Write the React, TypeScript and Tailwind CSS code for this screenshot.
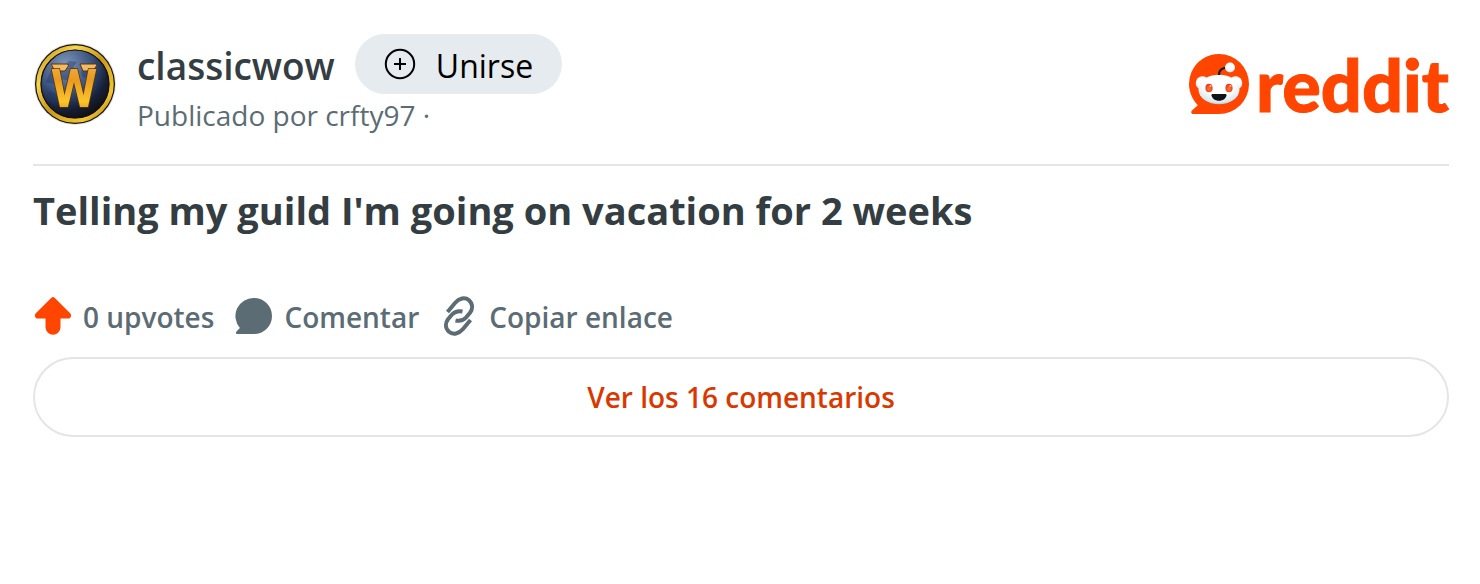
const Avatar = () => (
  <svg viewBox="0 0 84 84" className="size-[84px] shrink-0" role="img" aria-label="classicwow">
    <defs>
      <linearGradient id="ring" x1="0" y1="0" x2="1" y2="1">
        <stop offset="0" stopColor="#b8860f" />
        <stop offset="0.25" stopColor="#f7d650" />
        <stop offset="0.5" stopColor="#c9981a" />
        <stop offset="0.8" stopColor="#f2c62e" />
        <stop offset="1" stopColor="#9a6d10" />
      </linearGradient>
      <radialGradient id="globe" cx="0.35" cy="0.22" r="0.85">
        <stop offset="0" stopColor="#8096ba" />
        <stop offset="0.45" stopColor="#3d5682" />
        <stop offset="0.75" stopColor="#17213a" />
        <stop offset="1" stopColor="#100b0a" />
      </radialGradient>
      <linearGradient id="gold" x1="0" y1="0" x2="0" y2="1">
        <stop offset="0" stopColor="#f0b850" />
        <stop offset="0.35" stopColor="#e89a20" />
        <stop offset="0.7" stopColor="#fbc42a" />
        <stop offset="1" stopColor="#c47a12" />
      </linearGradient>
    </defs>
    <circle cx="42" cy="41" r="41" fill="#e3e3e3" />
    <circle cx="42" cy="41" r="40" fill="#15110a" />
    <circle cx="42" cy="41" r="36.5" fill="none" stroke="url(#ring)" strokeWidth="4.5" />
    <circle cx="42" cy="41" r="34" fill="url(#globe)" stroke="#15110a" strokeWidth="1.2" />
    <path d="M18 27l7-6 6 2 5-5 8 1-4 5 5 4-7 3-4 6-8-1-5 5-8-2z" fill="#1f3661" opacity="0.4" />
    <path d="M54 22l8 3 5 9-5 3-6-4-6 2-2-6z M14 47l8 3 4 8-5 3-6-5z" fill="#1f3661" opacity="0.4" />
    <path d="M18 21h16l2 1-4 6H22z M47 21h16l1 1-4 6H50z" fill="#f0bd66" stroke="#5e3309" strokeWidth="1" />
    <text
      x="41"
      y="64"
      textAnchor="middle"
      fontFamily="Roboto, sans-serif"
      fontWeight="700"
      fontSize="53"
      fill="url(#gold)"
      stroke="#5e3309"
      strokeWidth="1.5"
      paintOrder="stroke"
    >
      W
    </text>
  </svg>
)

const Snoo = () => (
  <svg viewBox="0 0 62 62" className="size-[62px] shrink-0" aria-hidden="true">
    <defs>
      <radialGradient id="face" cx="0.5" cy="0.3" r="0.75">
        <stop offset="0.5" stopColor="#ffffff" />
        <stop offset="0.85" stopColor="#dbe6ec" />
        <stop offset="1" stopColor="#94a9b8" />
      </radialGradient>
      <radialGradient id="eye" cx="0.5" cy="0.6" r="0.6">
        <stop offset="0" stopColor="#ff7a2a" />
        <stop offset="1" stopColor="#e8321a" />
      </radialGradient>
    </defs>
    <path d="M31 1a30 30 0 0 1 0 60H5.500c-2.200 0-3-2-1.500-3.500l5.800-5.300A30 30 0 0 1 31 1z" fill="#ff4500" />
    <circle cx="14.500" cy="30" r="6.800" fill="url(#face)" />
    <circle cx="47.500" cy="30" r="6.800" fill="url(#face)" />
    <ellipse cx="31" cy="36.500" rx="20.500" ry="14.800" fill="url(#face)" />
    <path d="M31 22c0-4 2.800-7 7.500-7.500" fill="none" stroke="#171c1f" strokeWidth="2.200" />
    <circle cx="42" cy="14.500" r="5" fill="url(#face)" />
    <ellipse cx="21" cy="35" rx="3.600" ry="4.300" fill="url(#eye)" />
    <ellipse cx="41" cy="35" rx="3.600" ry="4.300" fill="url(#eye)" />
    <circle cx="22.500" cy="33" r="1" fill="#ffc9a8" />
    <circle cx="42.500" cy="33" r="1" fill="#ffc9a8" />
    <path d="M23.500 42.200c0-.8.600-1.100 1.500-1.100h12c.9 0 1.500.3 1.500 1.100-.6 3.400-3.500 5.500-7.500 5.500s-6.900-2.100-7.500-5.500z" fill="#101416" />
  </svg>
)

const JoinIcon = () => (
  <svg viewBox="0 0 32 32" className="size-8" fill="none" stroke="currentColor" strokeWidth="2" aria-hidden="true">
    <circle cx="16" cy="16" r="14.200" />
    <path d="M16 10v12M10 16h12" />
  </svg>
)

const UpvoteIcon = () => (
  <svg viewBox="0 0 40 40" className="size-10" fill="#ff4500" aria-hidden="true">
    <path d="M18.400 1.700a2.300 2.300 0 0 1 3.200 0L37.200 17.200c1.700 1.900.8 5.300-1.800 5.300H27.500v8.800a7.500 7.500 0 0 1-15 0V22.500H4.600c-2.600 0-3.500-3.400-1.800-5.300z" />
  </svg>
)

const CommentIcon = () => (
  <svg viewBox="0 0 40 40" className="size-10" fill="#5c6c74" aria-hidden="true">
    <path d="M20 2a18 18 0 0 1 0 36H3.500c-1.500 0-2-1.500-1-2.500l3.400-3.600A18 18 0 0 1 20 2z" />
  </svg>
)

const LinkIcon = () => (
  <svg viewBox="0 0 40 40" className="size-10" fill="none" stroke="#5c6c74" strokeWidth="4" aria-hidden="true">
    <path d="M8.500 16L16 7C20 2.300 26 .8 30 4.300C34 8 33.800 13 31 16.800L27 21.500C24.300 24.500 21 25.500 16.500 24.500" />
    <path d="M31.500 24L24 33C20 37.700 14 39.200 10 35.700C6 32 6.200 27 9 23.200L13 18.500C15.700 15.500 19 14.500 23.500 15.500" />
  </svg>
)

const App = () => {
  return (
    <div className="min-h-screen bg-white pt-[34px] pr-[31px] pl-[33px] font-['Open_Sans','Noto_Sans',sans-serif] text-[#5c6c74]">
      <header className="flex items-center justify-between border-b-2 border-[#e5e5e5] pb-7">
        <div className="flex items-center gap-5">
          <Avatar />
          <div>
            <div className="flex items-center gap-5">
              <a href="#classicwow" className="pt-1 text-[37px] leading-[56px] font-semibold text-[#333d42]">classicwow</a>
              <button type="button" className="flex h-[60px] items-center gap-5 rounded-full bg-[#e5ebee] px-[29px] text-[32px] text-black">
                <JoinIcon />
                <span className="pt-1">Unirse</span>
              </button>
            </div>
            <p className="text-[28px] leading-[42px]">
              Publicado por <a href="#crfty97">crfty97</a> ·
            </p>
          </div>
        </div>
        <a href="#reddit" className="flex items-center gap-1.5 pb-0.5 text-[#ff4500]">
          <Snoo />
          <span className="font-['Lato',sans-serif] text-[72px] leading-[60px] font-black [-webkit-text-stroke:1px_#ff4500]">reddit</span>
        </a>
      </header>
      <main>
        <h1 className="mt-3.5 text-[38px] leading-[60px] font-bold text-[#333d42]">
          Telling my guild I'm going on vacation for 2 weeks
        </h1>
        <div className="mt-[50px] flex items-center gap-5 text-[28px] leading-[50px] font-semibold">
          <button type="button" className="flex items-center gap-2.5">
            <UpvoteIcon />
            <span className="pt-0.5">0 upvotes</span>
          </button>
          <button type="button" className="flex items-center gap-2.5">
            <CommentIcon />
            <span className="pt-0.5">Comentar</span>
          </button>
          <button type="button" className="flex items-center gap-2.5">
            <LinkIcon />
            <span className="pt-0.5">Copiar enlace</span>
          </button>
        </div>
        <a
          href="#comentarios"
          className="mt-[15px] flex h-20 items-center justify-center rounded-full border-2 border-[#e5e5e5] text-[28px] font-semibold text-[#d93900]"
        >
          Ver los 16 comentarios
        </a>
      </main>
    </div>
  )
}

export default App
